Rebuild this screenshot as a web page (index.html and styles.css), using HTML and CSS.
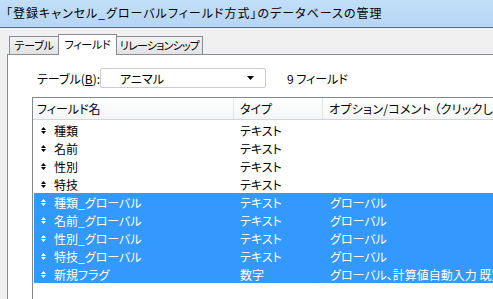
FILE: index.html
```html
<!DOCTYPE html>
<html lang="ja">
<head>
<meta charset="utf-8">
<link rel="stylesheet" href="styles.css">
</head>
<body>
<div class="window">
  <div class="titlebar">「登録キャンセル_グローバルフィールド方式」のデータベースの管理</div>
  <div class="tabs">
    <div class="tab tab-table">テーブル</div>
    <div class="tab tab-active">フィールド</div>
    <div class="tab tab-rel">リレーションシップ</div>
  </div>
  <div class="panel">
    <div class="tablerow">
      <span class="label">テーブル(<u>B</u>):</span>
      <div class="combo">
        <span class="combo-text">アニマル</span>
        <svg class="combo-arrow" width="7" height="4" viewBox="0 0 7 4"><path d="M0 0H7L3.5 4Z" fill="#000"/></svg>
      </div>
      <span class="count">9 フィールド</span>
    </div>
    <div class="list">
      <div class="header">
        <div class="hcol hname">フィールド名</div>
        <div class="hcol htype">タイプ</div>
        <div class="hcol hopt">オプション/コメント （クリックして切り替え）</div>
      </div>
      <div class="rows">
        <div class="row"><svg class="grip" width="5" height="7" viewBox="0 0 5 7"><path d="M2.5 0L5 3H0Z M0 4H5L2.5 7Z" fill="currentColor"/></svg><span class="cname">種類</span><span class="ctype">テキスト</span><span class="copt"></span></div>
        <div class="row"><svg class="grip" width="5" height="7" viewBox="0 0 5 7"><path d="M2.5 0L5 3H0Z M0 4H5L2.5 7Z" fill="currentColor"/></svg><span class="cname">名前</span><span class="ctype">テキスト</span><span class="copt"></span></div>
        <div class="row"><svg class="grip" width="5" height="7" viewBox="0 0 5 7"><path d="M2.5 0L5 3H0Z M0 4H5L2.5 7Z" fill="currentColor"/></svg><span class="cname">性別</span><span class="ctype">テキスト</span><span class="copt"></span></div>
        <div class="row"><svg class="grip" width="5" height="7" viewBox="0 0 5 7"><path d="M2.5 0L5 3H0Z M0 4H5L2.5 7Z" fill="currentColor"/></svg><span class="cname">特技</span><span class="ctype">テキスト</span><span class="copt"></span></div>
        <div class="row sel"><svg class="grip" width="5" height="7" viewBox="0 0 5 7"><path d="M2.5 0L5 3H0Z M0 4H5L2.5 7Z" fill="currentColor"/></svg><span class="cname">種類_グローバル</span><span class="ctype">テキスト</span><span class="copt">グローバル</span></div>
        <div class="row sel"><svg class="grip" width="5" height="7" viewBox="0 0 5 7"><path d="M2.5 0L5 3H0Z M0 4H5L2.5 7Z" fill="currentColor"/></svg><span class="cname">名前_グローバル</span><span class="ctype">テキスト</span><span class="copt">グローバル</span></div>
        <div class="row sel"><svg class="grip" width="5" height="7" viewBox="0 0 5 7"><path d="M2.5 0L5 3H0Z M0 4H5L2.5 7Z" fill="currentColor"/></svg><span class="cname">性別_グローバル</span><span class="ctype">テキスト</span><span class="copt">グローバル</span></div>
        <div class="row sel"><svg class="grip" width="5" height="7" viewBox="0 0 5 7"><path d="M2.5 0L5 3H0Z M0 4H5L2.5 7Z" fill="currentColor"/></svg><span class="cname">特技_グローバル</span><span class="ctype">テキスト</span><span class="copt">グローバル</span></div>
        <div class="row sel"><svg class="grip" width="5" height="7" viewBox="0 0 5 7"><path d="M2.5 0L5 3H0Z M0 4H5L2.5 7Z" fill="currentColor"/></svg><span class="cname">新規フラグ</span><span class="ctype">数字</span><span class="copt">グローバル、計算値自動入力 既定値</span></div>
      </div>
    </div>
  </div>
</div>
</body>
</html>
```
FILE: styles.css
```css
* { box-sizing: border-box; }
html, body {
  margin: 0;
  padding: 0;
  width: 493px;
  height: 299px;
  overflow: hidden;
  background: #f0f0f0;
  font-family: "Noto Sans CJK JP", "Noto Sans", sans-serif;
  font-size: 12px;
  color: #000;
}
.window {
  display: flex;
  flex-direction: column;
  height: 299px;
}
.titlebar {
  height: 28px;
  flex: none;
  background: linear-gradient(#c2def8, #b6d6f6);
  border-bottom: 1px solid #5a6e84;
  padding-left: 6px;
  line-height: 26px;
  font-size: 12px;
  white-space: nowrap;
  font-feature-settings: "palt" 1;
  letter-spacing: 1px;
}
.tabs {
  display: flex;
  align-items: flex-end;
  height: 26px;
  flex: none;
  padding-left: 9px;
  position: relative;
  z-index: 1;
}
.tab {
  height: 18px;
  border: 1px solid #898c95;
  border-bottom: none;
  background: linear-gradient(#f3f3f3, #e2e2e2);
  text-align: center;
  line-height: 17px;
  font-size: 11px;
  letter-spacing: -0.3px;
  white-space: nowrap;
  overflow: hidden;
  font-feature-settings: "palt" 1;
}
.tab-table { width: 49px; border-right: none; }
.tab-active {
  width: 59px;
  height: 21px;
  background: #fff;
  margin-bottom: -1px;
  line-height: 19px;
}
.tab-rel { width: 86px; border-left: none; letter-spacing: -0.8px; }
.panel {
  flex: 1;
  margin-left: 7px;
  background: #fff;
  border-top: 1px solid #898c95;
  border-left: 1px solid #898c95;
  overflow: hidden;
}
.tablerow {
  display: flex;
  align-items: center;
  height: 20px;
  margin-top: 13px;
  padding-left: 29px;
  white-space: nowrap;
  font-feature-settings: "palt" 1;
}
.label { width: 63px; }
.label u { text-decoration: underline; }
.combo {
  width: 166px;
  height: 20px;
  border: 1px solid #c9ccd2;
  border-radius: 2px;
  display: flex;
  align-items: center;
  padding-left: 19px;
  padding-right: 11px;
}
.combo-text { flex: 1; }
.count { margin-left: 21px; }
.list {
  margin-top: 9px;
  margin-left: 24px;
  border-top: 1px solid #828790;
  border-left: 1px solid #828790;
  height: 220px;
}
.header {
  display: flex;
  height: 22px;
  border-bottom: 1px solid #d5d5d5;
  background: linear-gradient(#ffffff, #f4f5f6);
  white-space: nowrap;
  font-feature-settings: "palt" 1;
  line-height: 21px;
}
.hcol { flex: none; }
.hname { width: 201px; padding-left: 4px; border-right: 1px solid #e3e5e8; }
.htype { width: 89px; padding-left: 6px; border-right: 1px solid #e3e5e8; }
.hopt { padding-left: 6px; letter-spacing: 0.3px; }
.rows {
  padding: 1px 0 0 1px;
}
.row {
  display: flex;
  align-items: center;
  height: 18px;
  white-space: nowrap;
  font-feature-settings: "palt" 1;
  color: #000;
}
.row.sel {
  background: #3399ff;
  color: #fff;
}
.grip {
  flex: none;
  margin-left: 7px;
  margin-right: 8px;
}
.cname { width: 186px; flex: none; }
.ctype { width: 90px; flex: none; }
.copt { flex: none; }
```
